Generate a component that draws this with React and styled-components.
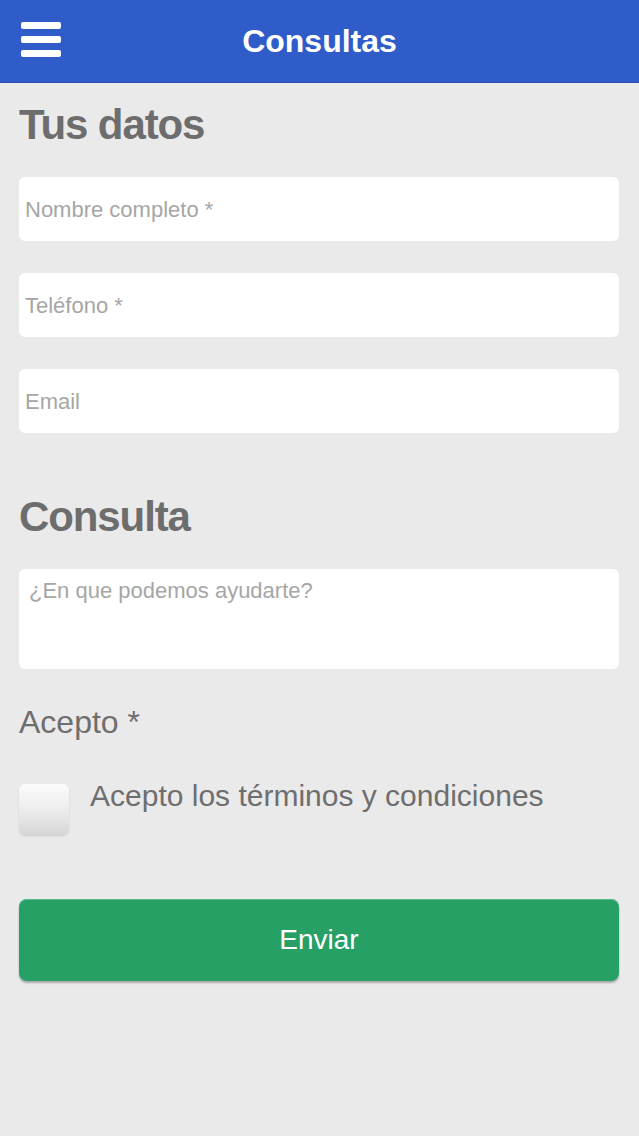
import React from "react";
import styled, { createGlobalStyle } from "styled-components";

const GlobalStyle = createGlobalStyle`
  html, body {
    margin: 0;
    padding: 0;
    background: #ebeaeb;
  }
  body {
    font-family: "Liberation Sans", Arial, Helvetica, sans-serif;
    min-height: 1136px;
  }
  * { box-sizing: border-box; }
  input::placeholder, textarea::placeholder { color: #a6a6a6; opacity: 1; }
`;

const Page = styled.div`
  width: 639px;
  min-height: 1136px;
  background: #ebeaeb;
`;

const Header = styled.header`
  position: relative;
  height: 83px;
  background: #2f5cc8;
  border-bottom: 1px solid #2a52b4;
  display: flex;
  align-items: center;
  justify-content: center;
`;

const MenuButton = styled.button`
  position: absolute;
  left: 21px;
  top: 22px;
  width: 40px;
  height: 35px;
  padding: 0;
  border: 0;
  background: transparent;
  display: flex;
  flex-direction: column;
  justify-content: space-between;
  cursor: pointer;
`;

const Bar = styled.span`
  display: block;
  width: 40px;
  height: 7px;
  border-radius: 2px;
  background: #ffffff;
`;

const Title = styled.h1`
  margin: 0;
  color: #ffffff;
  font-size: 32px;
  font-weight: bold;
  line-height: 1;
  margin-top: -1px;
`;

const Content = styled.main`
  padding: 0 20px 0 19px;
  display: flex;
  flex-direction: column;
`;

const SectionTitle = styled.h2`
  margin: ${(p) => p.$top}px 0 28px;
  font-size: 42px;
  line-height: 48px;
  font-weight: bold;
  letter-spacing: -1.1px;
  color: #6d6d6d;
`;

const Fields = styled.div`
  display: flex;
  flex-direction: column;
  gap: 32px;
`;

const Input = styled.input`
  width: 100%;
  height: 64px;
  border: 0;
  border-radius: 6px;
  background: #ffffff;
  padding: 2px 6px 0;
  font-family: inherit;
  font-size: 22px;
  color: #555;
  outline: none;
`;

const TextArea = styled.textarea`
  width: 100%;
  height: 100px;
  border: 0;
  border-radius: 6px;
  background: #ffffff;
  padding: 9px 10px;
  font-family: inherit;
  font-size: 22px;
  line-height: 26px;
  color: #555;
  resize: none;
  outline: none;
  display: block;
`;

const Label = styled.div`
  margin-top: 35px;
  font-size: 32px;
  line-height: 36px;
  color: #6e6e6e;
`;

const CheckRow = styled.label`
  margin-top: 38px;
  display: flex;
  align-items: flex-start;
  gap: 21px;
  cursor: pointer;
`;

const CheckBox = styled.span`
  margin-top: 6px;
  flex: none;
  width: 50px;
  height: 51px;
  border-radius: 6px;
  background: linear-gradient(#fbfbfb 0%, #efefef 45%, #d6d6d6 100%);
  box-shadow: 0 1px 2px rgba(0, 0, 0, 0.12);
`;

const CheckText = styled.span`
  font-size: 30px;
  line-height: 36px;
  color: #6e6e6e;
`;

const SubmitButton = styled.button`
  margin-top: 64px;
  width: 100%;
  height: 82px;
  border: 0;
  border-radius: 8px;
  background: #27a066;
  box-shadow: 0 1px 0 #5cbb8c inset, 0 2px 2px rgba(0, 0, 0, 0.28);
  color: #ffffff;
  font-family: inherit;
  font-size: 28px;
  cursor: pointer;
`;

export default function App() {
  return (
    <Page>
      <GlobalStyle />
      <Header>
        <MenuButton aria-label="Menú">
          <Bar />
          <Bar />
          <Bar />
        </MenuButton>
        <Title>Consultas</Title>
      </Header>
      <Content>
        <SectionTitle $top={18}>Tus datos</SectionTitle>
        <Fields>
          <Input placeholder="Nombre completo *" />
          <Input placeholder="Teléfono *" />
          <Input placeholder="Email" />
        </Fields>
        <SectionTitle $top={60}>Consulta</SectionTitle>
        <TextArea placeholder="¿En que podemos ayudarte?" />
        <Label>Acepto *</Label>
        <CheckRow>
          <CheckBox />
          <CheckText>Acepto los términos y condiciones</CheckText>
        </CheckRow>
        <SubmitButton>Enviar</SubmitButton>
      </Content>
    </Page>
  );
}
